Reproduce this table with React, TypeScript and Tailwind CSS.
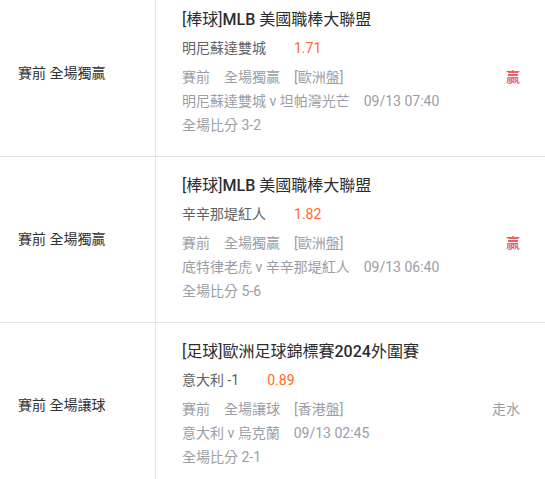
import React from "react";

type Bet = {
  market: string;
  league: React.ReactNode;
  pick: string;
  odds: string;
  period: string;
  type: string;
  handicap: string;
  match: string;
  time: string;
  score: string;
  result: string;
  win: boolean;
};

// latin bits of the league title are rendered medium, the CJK stays regular
const M = ({ children }: { children: React.ReactNode }) => (
  <span className="font-medium">{children}</span>
);

const BETS: Bet[] = [
  {
    market: "賽前 全場獨贏",
    league: (
      <>
        [棒球]<M>MLB</M> 美國職棒大聯盟
      </>
    ),
    pick: "明尼蘇達雙城",
    odds: "1.71",
    period: "賽前",
    type: "全場獨贏",
    handicap: "[歐洲盤]",
    match: "明尼蘇達雙城 v 坦帕灣光芒",
    time: "09/13 07:40",
    score: "全場比分 3-2",
    result: "贏",
    win: true,
  },
  {
    market: "賽前 全場獨贏",
    league: (
      <>
        [棒球]<M>MLB</M> 美國職棒大聯盟
      </>
    ),
    pick: "辛辛那堤紅人",
    odds: "1.82",
    period: "賽前",
    type: "全場獨贏",
    handicap: "[歐洲盤]",
    match: "底特律老虎 v 辛辛那堤紅人",
    time: "09/13 06:40",
    score: "全場比分 5-6",
    result: "贏",
    win: true,
  },
  {
    market: "賽前 全場讓球",
    league: (
      <>
        [足球]歐洲足球錦標賽<M>2024</M>外圍賽
      </>
    ),
    pick: "意大利 -1",
    odds: "0.89",
    period: "賽前",
    type: "全場讓球",
    handicap: "[香港盤]",
    match: "意大利 v 烏克蘭",
    time: "09/13 02:45",
    score: "全場比分 2-1",
    result: "走水",
    win: false,
  },
];

function BetRow({ bet }: { bet: Bet }) {
  return (
    <div className="grid grid-cols-[156px_1fr] border-b border-[#e0e3e8]">
      {/* market column */}
      <div className="flex items-center border-r border-[#e0e3e8] pl-[18px] text-[14px] text-[#303133]">
        {bet.market}
      </div>

      {/* detail column */}
      <div className="pl-[26px] pr-[25px] pt-[17px] pb-[19px]">
        <div className="text-[16px] leading-[24px] text-[#2a2c30]">{bet.league}</div>
        <div className="mt-[4px] text-[14px] leading-[24px] text-[#606266]">
          {bet.pick}
          <span className="ml-[28px] text-[#ff6a2a]">{bet.odds}</span>
        </div>
        <div className="mt-[5px] text-[14px] leading-[24px] text-[#9a9ea6]">
          <div className="flex justify-between">
            <div>
              <span className="mr-[14px]">{bet.period}</span>
              <span className="mr-[14px]">{bet.type}</span>
              <span>{bet.handicap}</span>
            </div>
            <span className={bet.win ? "text-[#f2363e]" : "text-[#9a9ea6]"}>{bet.result}</span>
          </div>
          <div>
            {bet.match}
            <span className="ml-[14px]">{bet.time}</span>
          </div>
          <div>{bet.score}</div>
        </div>
      </div>
    </div>
  );
}

export default function App() {
  return (
    <div
      className="h-[479px] w-[545px] overflow-hidden bg-white"
      style={{ fontFamily: 'Roboto, "Noto Sans CJK TC", sans-serif' }}
    >
      <div className="-mt-[9px]">
        {BETS.map((b, i) => (
          <BetRow key={i} bet={b} />
        ))}
      </div>
    </div>
  );
}
